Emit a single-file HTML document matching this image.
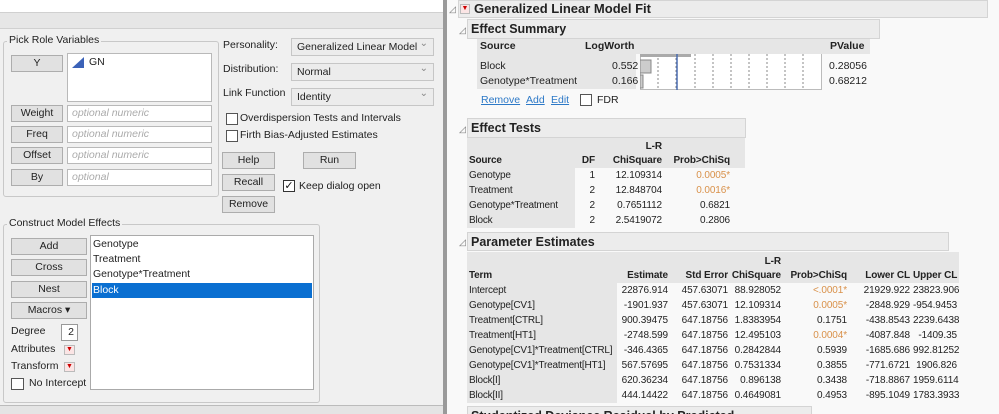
<!DOCTYPE html>
<html><head><meta charset="utf-8"><style>
*{margin:0;padding:0;box-sizing:border-box}
html,body{width:999px;height:414px;overflow:hidden}
body{background:#f7f7f7;font-family:"Liberation Sans",sans-serif;font-size:10.5px;color:#222;position:relative}
.a{position:absolute;white-space:nowrap}
.btn{position:absolute;background:#e1e1e1;border:1px solid #adadad;text-align:center;line-height:14px;font-size:10.5px}
.fld{position:absolute;background:#fff;border:1px solid #b9b9b9;color:#aaa;font-style:italic;padding-left:4px;line-height:14px}
.grp{position:absolute;border:1px solid #c8c8c8;border-radius:3px}
.lbl{position:absolute;background:#f0f0f0;padding:0 2px;font-size:10.5px}
.dd{position:absolute;background:#ececec;border:1px solid #c6c6c6;padding-left:5px;line-height:16px}
.dd:after{content:"⌄";position:absolute;right:5px;top:-3px;color:#888;font-size:10px}
.cb{position:absolute;width:12px;height:12px;border:1px solid #333;background:#fff}
.hd{position:absolute;background:#ececec;border:1px solid #d4d4d4;font-weight:bold;font-size:12.5px;padding-left:3px;line-height:18px}
.tri{position:absolute;font-size:9px;color:#777}
table{position:absolute;border-collapse:collapse;font-size:10px;table-layout:fixed}
td{padding:0 2px 0 1px;height:15px;line-height:15px;text-align:right;white-space:nowrap;overflow:hidden;letter-spacing:-0.1px}
td.l{text-align:left;background:#e6e6e6;letter-spacing:-0.2px;padding-left:2px}
tr.h td{background:#e6e6e6;font-weight:bold;vertical-align:bottom;line-height:14px}
.o{color:#d9914a}
</style></head><body>
<!-- left panel -->
<div class="a" style="left:0;top:0;width:443px;height:414px;background:#f0f0f0"></div>
<div class="a" style="left:0;top:0;width:443px;height:12px;background:#fff"></div>
<div class="a" style="left:0;top:12px;width:443px;height:17px;background:#e6e6e6;border-top:1px solid #d0d0d0;border-bottom:1px solid #d0d0d0"></div>
<div class="a" style="left:443px;top:0;width:4px;height:414px;background:#9a9a9a"></div>

<div class="grp" style="left:3px;top:41px;width:216px;height:156px"></div>
<div class="lbl" style="left:7px;top:34px">Pick Role Variables</div>
<div class="btn" style="left:11px;top:55px;width:52px;height:17px">Y</div>
<div class="a" style="left:67px;top:53px;width:145px;height:49px;background:#fff;border:1px solid #b9b9b9"></div>
<svg class="a" style="left:72px;top:57px" width="12" height="11"><polygon points="0,11 12,0 12,11" fill="#3b62b8"/></svg>
<div class="a" style="left:89px;top:56px">GN</div>
<div class="btn" style="left:11px;top:105px;width:52px;height:17px">Weight</div>
<div class="fld" style="left:67px;top:105px;width:145px;height:17px">optional numeric</div>
<div class="btn" style="left:11px;top:126px;width:52px;height:17px">Freq</div>
<div class="fld" style="left:67px;top:126px;width:145px;height:17px">optional numeric</div>
<div class="btn" style="left:11px;top:147px;width:52px;height:17px">Offset</div>
<div class="fld" style="left:67px;top:147px;width:145px;height:17px">optional numeric</div>
<div class="btn" style="left:11px;top:169px;width:52px;height:17px">By</div>
<div class="fld" style="left:67px;top:169px;width:145px;height:17px">optional</div>

<div class="a" style="left:223px;top:39px">Personality:</div>
<div class="dd" style="left:291px;top:38px;width:143px;height:18px">Generalized Linear Model</div>
<div class="a" style="left:223px;top:63px">Distribution:</div>
<div class="dd" style="left:291px;top:63px;width:143px;height:18px">Normal</div>
<div class="a" style="left:223px;top:87px">Link Function</div>
<div class="dd" style="left:291px;top:88px;width:143px;height:18px">Identity</div>
<div class="cb" style="left:226px;top:113px;border-color:#555"></div>
<div class="a" style="left:240px;top:112px">Overdispersion Tests and Intervals</div>
<div class="cb" style="left:226px;top:130px;border-color:#555"></div>
<div class="a" style="left:240px;top:129px">Firth Bias-Adjusted Estimates</div>
<div class="btn" style="left:222px;top:152px;width:53px;height:17px">Help</div>
<div class="btn" style="left:303px;top:152px;width:53px;height:17px">Run</div>
<div class="btn" style="left:222px;top:174px;width:53px;height:17px">Recall</div>
<div class="cb" style="left:283px;top:180px;font-size:11px;line-height:10px;text-align:center;color:#111">✓</div>
<div class="a" style="left:299px;top:180px">Keep dialog open</div>
<div class="btn" style="left:222px;top:196px;width:53px;height:17px">Remove</div>

<div class="grp" style="left:3px;top:224px;width:317px;height:179px"></div>
<div class="lbl" style="left:7px;top:217px">Construct Model Effects</div>
<div class="btn" style="left:11px;top:238px;width:76px;height:17px">Add</div>
<div class="btn" style="left:11px;top:259px;width:76px;height:17px">Cross</div>
<div class="btn" style="left:11px;top:281px;width:76px;height:17px">Nest</div>
<div class="btn" style="left:11px;top:302px;width:76px;height:17px">Macros ▾</div>
<div class="a" style="left:11px;top:325px">Degree</div>
<div class="a" style="left:61px;top:324px;width:17px;height:17px;background:#fff;border:1px solid #999;text-align:right;padding-right:3px;line-height:15px">2</div>
<div class="a" style="left:11px;top:343px">Attributes</div>
<div class="a" style="left:64px;top:345px;width:11px;height:10px;background:#fbe5e5;border:1px solid #bbb;color:#c00;font-size:7px;line-height:8px;text-align:center">▼</div>
<div class="a" style="left:11px;top:360px">Transform</div>
<div class="a" style="left:64px;top:362px;width:11px;height:10px;background:#fbe5e5;border:1px solid #bbb;color:#c00;font-size:7px;line-height:8px;text-align:center">▼</div>
<div class="cb" style="left:11px;top:378px;width:13px;height:12px;border-color:#555"></div>
<div class="a" style="left:29px;top:377px">No Intercept</div>
<div class="a" style="left:90px;top:235px;width:224px;height:155px;background:#fff;border:1px solid #aaa"></div>
<div class="a" style="left:93px;top:238px">Genotype</div>
<div class="a" style="left:93px;top:253px">Treatment</div>
<div class="a" style="left:93px;top:268px">Genotype*Treatment</div>
<div class="a" style="left:92px;top:283px;width:220px;height:15px;background:#0a6fd1;color:#fff;padding-left:1px;line-height:15px">Block</div>
<div class="a" style="left:0;top:405px;width:443px;height:9px;background:#e4e4e4;border-top:1px solid #bbb"></div>

<!-- right panel -->
<div class="a" style="left:447px;top:0;width:552px;height:414px;background:#f9f9f9"></div>
<div class="tri" style="left:449px;top:4px">◿</div>
<div class="a" style="left:458px;top:0;width:530px;height:18px;background:#ececec;border:1px solid #d4d4d4"></div>
<div class="a" style="left:460px;top:4px;width:10px;height:10px;background:#fbe5e5;border:1px solid #bbb;color:#c00;font-size:7px;line-height:8px;text-align:center">▼</div>
<div class="a" style="left:474px;top:0px;font-weight:bold;font-size:13px;line-height:18px">Generalized Linear Model Fit</div>

<div class="tri" style="left:459px;top:25px">◿</div>
<div class="hd" style="left:467px;top:19px;width:413px;height:20px">Effect Summary</div>
<div class="a" style="left:477px;top:39px;width:159px;height:50px;background:#e6e6e6"></div>
<div class="a" style="left:636px;top:39px;width:190px;height:15px;background:#e6e6e6"></div>
<div class="a" style="left:826px;top:39px;width:44px;height:15px;background:#e6e6e6"></div>
<div class="a" style="left:480px;top:39px;font-weight:bold;line-height:15px">Source</div>
<div class="a" style="left:585px;top:39px;font-weight:bold;line-height:15px">LogWorth</div>
<div class="a" style="left:830px;top:39px;font-weight:bold;line-height:15px">PValue</div>
<div class="a" style="left:480px;top:60px">Block</div><div class="a" style="left:612px;top:60px">0.552</div><div class="a" style="left:829px;top:60px">0.28056</div>
<div class="a" style="left:480px;top:75px">Genotype*Treatment</div><div class="a" style="left:612px;top:75px">0.166</div><div class="a" style="left:829px;top:75px">0.68212</div>
<div class="a" style="left:640px;top:54px;width:182px;height:36px;background:#fff;border:1px solid #bbb;border-top:none"></div>
<svg class="a" style="left:640px;top:54px" width="182" height="36">
<g stroke="#888" stroke-dasharray="2,2"><line x1="18" y1="0" x2="18" y2="36"/><line x1="36" y1="0" x2="36" y2="36"/><line x1="55" y1="0" x2="55" y2="36"/><line x1="73" y1="0" x2="73" y2="36"/><line x1="91" y1="0" x2="91" y2="36"/><line x1="109" y1="0" x2="109" y2="36"/><line x1="127" y1="0" x2="127" y2="36"/><line x1="145" y1="0" x2="145" y2="36"/><line x1="163" y1="0" x2="163" y2="36"/></g>
<rect x="0" y="0" width="51" height="3" fill="#aaa"/>
<rect x="0" y="6" width="11" height="13" fill="#ccc" stroke="#888"/>
<rect x="0" y="21" width="3" height="13" fill="#ccc" stroke="#888"/>
<line x1="37" y1="0" x2="37" y2="36" stroke="#4a6cb0" stroke-width="1.5"/>
</svg>
<div class="a" style="left:481px;top:94px;color:#2d79c7;text-decoration:underline">Remove</div>
<div class="a" style="left:526px;top:94px;color:#2d79c7;text-decoration:underline">Add</div>
<div class="a" style="left:551px;top:94px;color:#2d79c7;text-decoration:underline">Edit</div>
<div class="cb" style="left:580px;top:94px;border-color:#555"></div>
<div class="a" style="left:597px;top:94px">FDR</div>

<div class="tri" style="left:459px;top:124px">◿</div>
<div class="hd" style="left:467px;top:118px;width:279px;height:20px">Effect Tests</div>
<table style="left:467px;top:138px;width:278px">
<colgroup><col style="width:108px"><col style="width:22px"><col style="width:67px"><col style="width:68px"><col style="width:13px"></colgroup>
<tr class="h"><td class="l" style="height:30px">Source</td><td>DF</td><td>L-R<br>ChiSquare</td><td>Prob&gt;ChiSq</td><td></td></tr>
<tr><td class="l">Genotype</td><td>1</td><td>12.109314</td><td class="o">0.0005*</td><td></td></tr>
<tr><td class="l">Treatment</td><td>2</td><td>12.848704</td><td class="o">0.0016*</td><td></td></tr>
<tr><td class="l">Genotype*Treatment</td><td>2</td><td>0.7651112</td><td>0.6821</td><td></td></tr>
<tr><td class="l">Block</td><td>2</td><td>2.5419072</td><td>0.2806</td><td></td></tr>
</table>

<div class="tri" style="left:459px;top:237px">◿</div>
<div class="hd" style="left:467px;top:232px;width:482px;height:19px">Parameter Estimates</div>
<table style="left:467px;top:252px;width:492px">
<colgroup><col style="width:150px"><col style="width:53px"><col style="width:60px"><col style="width:53px"><col style="width:66px"><col style="width:63px"><col style="width:47px"></colgroup>
<tr class="h"><td class="l" style="height:31px">Term</td><td>Estimate</td><td>Std Error</td><td>L-R<br>ChiSquare</td><td>Prob&gt;ChiSq</td><td>Lower CL</td><td>Upper CL</td></tr>
<tr><td class="l">Intercept</td><td>22876.914</td><td>457.63071</td><td>88.928052</td><td class="o">&lt;.0001*</td><td>21929.922</td><td>23823.906</td></tr>
<tr><td class="l">Genotype[CV1]</td><td>-1901.937</td><td>457.63071</td><td>12.109314</td><td class="o">0.0005*</td><td>-2848.929</td><td>-954.9453</td></tr>
<tr><td class="l">Treatment[CTRL]</td><td>900.39475</td><td>647.18756</td><td>1.8383954</td><td>0.1751</td><td>-438.8543</td><td>2239.6438</td></tr>
<tr><td class="l">Treatment[HT1]</td><td>-2748.599</td><td>647.18756</td><td>12.495103</td><td class="o">0.0004*</td><td>-4087.848</td><td>-1409.35</td></tr>
<tr><td class="l">Genotype[CV1]*Treatment[CTRL]</td><td>-346.4365</td><td>647.18756</td><td>0.2842844</td><td>0.5939</td><td>-1685.686</td><td>992.81252</td></tr>
<tr><td class="l">Genotype[CV1]*Treatment[HT1]</td><td>567.57695</td><td>647.18756</td><td>0.7531334</td><td>0.3855</td><td>-771.6721</td><td>1906.826</td></tr>
<tr><td class="l">Block[I]</td><td>620.36234</td><td>647.18756</td><td>0.896138</td><td>0.3438</td><td>-718.8867</td><td>1959.6114</td></tr>
<tr><td class="l">Block[II]</td><td>444.14422</td><td>647.18756</td><td>0.4649081</td><td>0.4953</td><td>-895.1049</td><td>1783.3933</td></tr>
</table>
<div class="hd" style="left:467px;top:406px;width:345px;height:20px">Studentized Deviance Residual by Predicted</div>
</body></html>
